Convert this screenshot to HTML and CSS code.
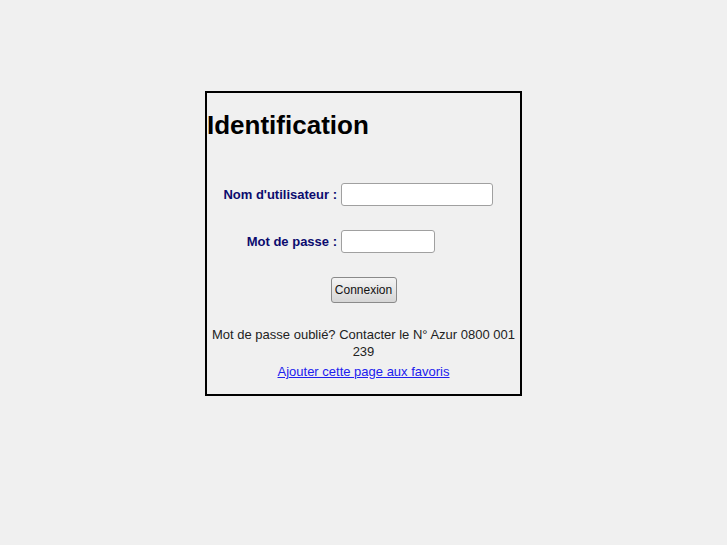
FILE: index.html
```html
<!DOCTYPE html>
<html>
<head>
<meta charset="utf-8">
<link rel="stylesheet" href="styles.css">
</head>
<body>
<div class="box">
  <h1 class="title">Identification</h1>
  <form class="form">
    <label class="label" for="u">Nom d'utilisateur :</label>
    <input class="input input-long" id="u" type="text">
    <label class="label" for="p">Mot de passe :</label>
    <input class="input input-short" id="p" type="password">
  </form>
  <div class="actions"><button class="btn" type="button">Connexion</button></div>
  <p class="note">Mot de passe oublié? Contacter le N° Azur 0800 001 239</p>
  <p class="fav"><a href="#">Ajouter cette page aux favoris</a></p>
</div>
</body>
</html>
```

FILE: styles.css
```css
html, body {
  margin: 0;
  padding: 0;
  background: #f0f0f0;
  font-family: "Liberation Sans", Arial, sans-serif;
}
body {
  padding-top: 91px;
}
.box {
  width: 313px;
  margin: 0 auto;
  border: 2px solid #000;
  height: 301px;
  box-sizing: content-box;
}
.title {
  margin: 16px 0 0 0;
  font-size: 26px;
  line-height: 32px;
  font-weight: bold;
  color: #000;
}
.form {
  display: grid;
  grid-template-columns: 130px auto;
  column-gap: 4px;
  row-gap: 24px;
  align-items: center;
  margin-top: 42px;
  justify-content: start;
}
.label {
  justify-self: end;
  font-size: 13px;
  font-weight: bold;
  color: #0b0b6e;
}
.input {
  height: 23px;
  box-sizing: border-box;
  border: 1px solid #a0a0a0;
  border-radius: 3px;
  background: #fff;
  margin: 0;
  padding: 1px 3px;
  font-family: inherit;
  font-size: 13px;
}
.input-long { width: 152px; }
.input-short { width: 94px; }
.actions {
  display: flex;
  justify-content: center;
  margin-top: 24px;
}
.btn {
  width: 66px;
  height: 26px;
  box-sizing: border-box;
  border: 1px solid #8a8a8a;
  border-radius: 3px;
  background: linear-gradient(#f4f4f4, #d6d6d6);
  font-family: inherit;
  font-size: 12px;
  color: #111;
  padding: 0;
}
.note {
  margin: 23px 0 0 0;
  padding: 0 4px;
  text-align: center;
  font-size: 13px;
  line-height: 17px;
  color: #222;
}
.fav {
  margin: 3px 0 0 0;
  text-align: center;
  font-size: 13px;
  line-height: 17px;
}
.fav a {
  color: #2020ee;
}
```
